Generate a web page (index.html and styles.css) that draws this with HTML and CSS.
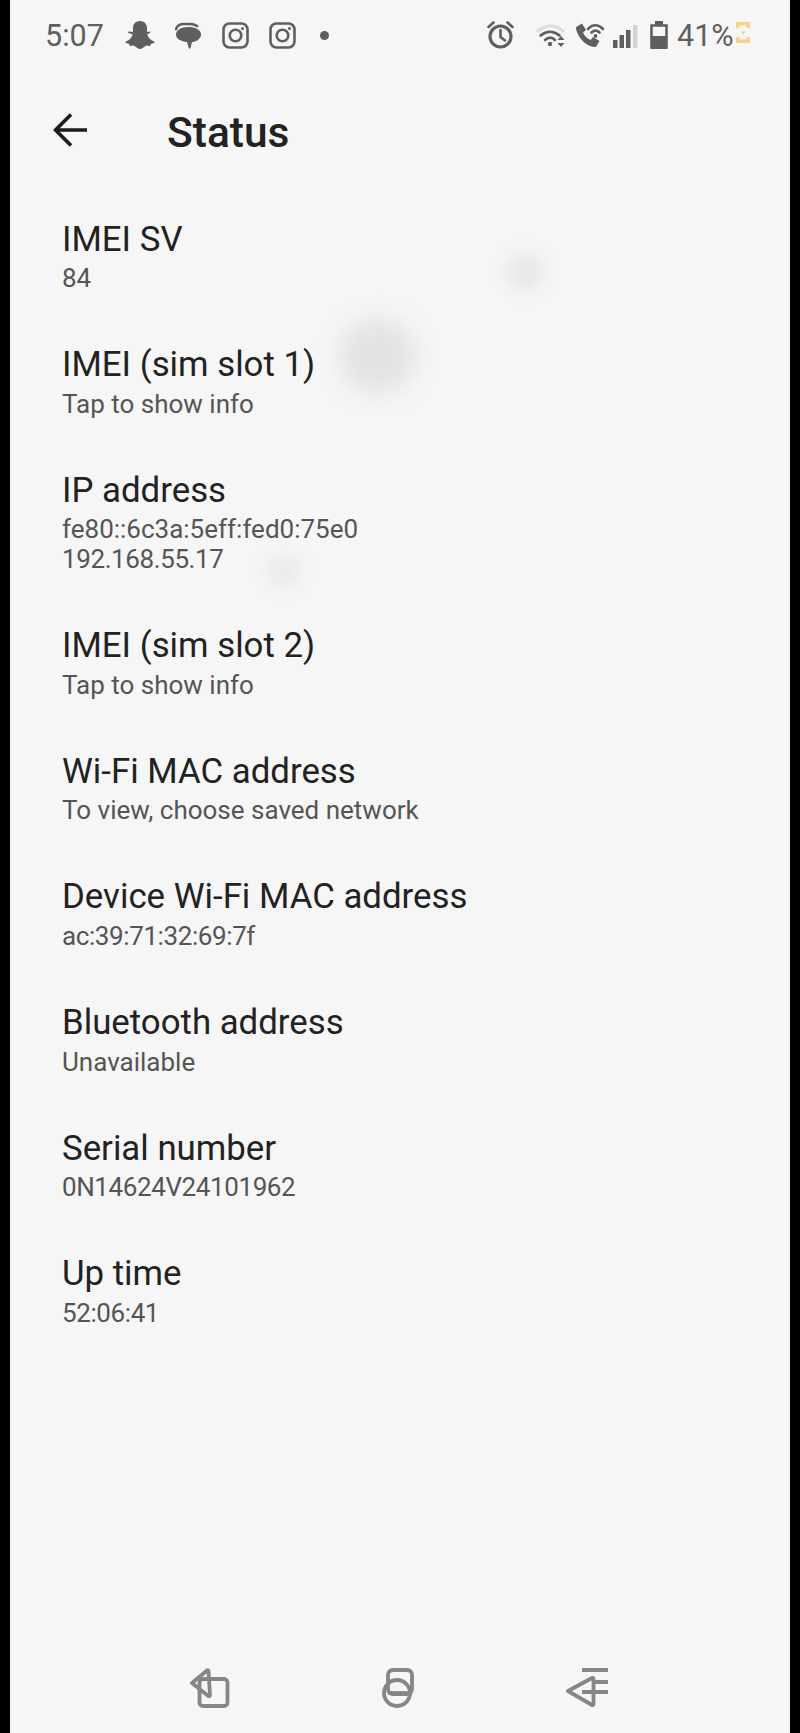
FILE: index.html
```html
<!DOCTYPE html>
<html lang="en">
<head>
  <meta charset="UTF-8" />
  <meta name="viewport" content="width=device-width, initial-scale=1.0"/>
  <title>Status</title>
  <link rel="stylesheet" href="styles.css">
</head>
<body>
  <div class="screen">
    <div class="statusbar">
      <div class="status-left">
        <span class="time">5:07</span>
        <!-- snapchat -->
        <svg class="ic-snap" viewBox="0 0 30 28"><path d="M15 0c4.300 0 7 3 7 7v4l2.500-.6c1 0 1.200 1.200.3 1.700l-2.600 1.400c.8 2.800 3.200 5.600 6.800 7 .9.400.7 1.300-.2 1.600l-3 .8-.7 2-3.500-.3c-2 .3-3.700 3.400-6.600 3.400s-4.600-3.100-6.600-3.400l-3.500.3-.7-2-3-.8c-.9-.3-1.100-1.200-.2-1.600 3.600-1.400 6-4.200 6.800-7L3.600 12.100c-.9-.5-.7-1.700.3-1.700L8 11V7c0-4 2.700-7 7-7z"/></svg>
        <!-- messages -->
        <svg class="ic-msg" viewBox="0 0 27 27"><path class="line" d="M1 7c1-3 4-5 8-5h6c3 0 5 .5 7 2"/><path d="M13 5c7 0 13 2.500 13 7.500S20 20 17 20l-1.500 6c-.4 1-1.500 1-1.800 0L12 20C6 19.500 1 17 1 12.500S6 5 13 5z"/></svg>
        <!-- instagram -->
        <svg class="ic-insta" viewBox="0 0 27 27"><rect class="line" x="1.500" y="1.500" width="24" height="24" rx="6"/><circle class="line" cx="13.500" cy="13.500" r="5.800"/><circle cx="20.500" cy="6.500" r="1.500"/></svg>
        <svg class="ic-insta" viewBox="0 0 27 27"><rect class="line" x="1.500" y="1.500" width="24" height="24" rx="6"/><circle class="line" cx="13.500" cy="13.500" r="5.800"/><circle cx="20.500" cy="6.500" r="1.500"/></svg>
        <span class="dot"></span>
      </div>
      <div class="status-right">
        <!-- alarm -->
        <svg class="ic-alarm" viewBox="0 0 27 28"><circle class="line thick" cx="13.500" cy="15.500" r="10.500"/><path class="line" d="M13.500 9v7l4.500 3.500M1.500 6l5-4.500M25.500 6l-5-4.500"/></svg>
        <!-- wifi with up and down arrows -->
        <svg class="ic-wifi" viewBox="0 0 31 24"><path class="faint" d="M1 9c8-8 19-8 27 0"/><path class="line" d="M4.500 12.500c6-5 13-5 19 0M9 17c3.500-3 7-3 10 0"/><circle cx="14" cy="21" r="2.200"/><path d="M25 13l-3.500 4h7zM25 24l-3.500-4h7z"/></svg>
        <!-- wifi calling -->
        <svg class="ic-call" viewBox="0 0 29 27"><path d="M2 4.500L7 1.500l4 6.500-3 2.500c1.500 3.500 4 6 7.500 7.500l2.500-3 6.500 4-3 5c-.6.900-1.500 1.200-2.500 1C10.500 23.500 3.500 16.500 1 7c-.2-1 .2-2 1-2.500z"/><path class="line" d="M13 7c4.500-5 10-5 15 0M16.500 10.500c3-2.800 5-2.800 8 0"/><circle cx="20.500" cy="14" r="1.900"/></svg>
        <!-- signal -->
        <svg class="ic-signal" viewBox="0 0 25 23"><rect y="15" width="4.500" height="8"/><rect x="6.500" y="10" width="4.500" height="13"/><rect x="13" y="5" width="4.500" height="18"/><rect class="bar-off" x="20" width="4.500" height="23"/></svg>
        <!-- battery -->
        <svg class="ic-batt" viewBox="0 0 18 28"><path class="line" d="M1.500 4.500h15v22h-15z"/><rect x="5" width="8" height="4"/><rect x="1" y="15" width="16" height="13"/></svg>
        <span class="pct">41%</span>
        <!-- charging mark -->
        <svg class="ic-charge" viewBox="0 0 14 21"><path d="M0 0h14v6h-3.500V3.500h-7V6H0zM0 21h14v-6h-3.500v2.500h-7V15H0zM4 9.500h6l-3 3z"/></svg>
      </div>
    </div>

    <div class="toolbar">
      <svg class="back" viewBox="0 0 35 34"><path d="M34 17H3M18 1.500L2.500 17 18 32.500"/></svg>
      <h1 class="title">Status</h1>
    </div>

    <div class="list">
      <div class="item"><div class="label">IMEI SV</div><div class="value">84</div></div>
      <div class="item"><div class="label">IMEI (sim slot 1)</div><div class="value">Tap to show info</div></div>
      <div class="item"><div class="label">IP address</div><div class="value">fe80::6c3a:5eff:fed0:75e0<br><span class="num">192.168.55.17</span></div></div>
      <div class="item"><div class="label">IMEI (sim slot 2)</div><div class="value">Tap to show info</div></div>
      <div class="item"><div class="label">Wi-Fi MAC address</div><div class="value">To view, choose saved network</div></div>
      <div class="item"><div class="label">Device Wi-Fi MAC address</div><div class="value"><span class="num">ac:39:71:32:69:7f</span></div></div>
      <div class="item"><div class="label">Bluetooth address</div><div class="value">Unavailable</div></div>
      <div class="item"><div class="label">Serial number</div><div class="value"><span class="num">0N14624V24101962</span></div></div>
      <div class="item"><div class="label">Up time</div><div class="value"><span class="num">52:06:41</span></div></div>
    </div>

    <div class="navbar">
      <svg class="nav-recent" viewBox="0 0 40 40"><path d="M2 15L17 2.500c.8-.5 1.500 0 1.500 1L20 27c0 1-.8 1.500-1.700 1z"/><rect x="9.500" y="11" width="28" height="27" rx="3.500"/></svg>
      <svg class="nav-home" viewBox="0 0 32 40"><rect x="6" y="2" width="24" height="24" rx="5"/><circle cx="15" cy="25" r="13"/><path d="M6 25h24"/></svg>
      <svg class="nav-back" viewBox="0 0 42 40"><path d="M2 23L26 10c1-.5 1.500 0 1.500 1v25c0 1-.6 1.500-1.500 1z"/><path d="M16 2h26M26 14h16M16 24h26"/></svg>
    </div>

    <!-- smudges on the screen -->
    <span class="smudge smudge-a"></span>
    <span class="smudge smudge-b"></span>
    <span class="smudge smudge-c"></span>
  </div>
</body>
</html>
```

FILE: styles.css
```css
* {
  box-sizing: border-box;
}

html,
body {
  margin: 0;
  padding: 0;
  height: 1733px;
  background: #000;
  overflow: hidden;
}

body {
  font-family: Roboto, sans-serif;
}

.screen {
  position: relative;
  margin: 0 10px;
  height: 1733px;
  overflow: hidden;
  background: #f6f6f6;
  display: flex;
  flex-direction: column;
}

.statusbar {
  height: 70px;
  padding: 0 40px 0 35px;
  display: flex;
  justify-content: space-between;
  align-items: center;
  color: #5f5f5f;
  fill: #5f5f5f;
}

.status-left,
.status-right {
  display: flex;
  align-items: center;
}

.statusbar svg {
  display: block;
  flex: none;
}

.line {
  fill: none;
  stroke: #5f5f5f;
  stroke-width: 2.6;
  stroke-linecap: round;
}

.line.thick {
  stroke-width: 3.2;
}

.faint {
  fill: none;
  stroke: #dcdcdc;
  stroke-width: 3;
}

.bar-off {
  fill: #d2d2d2;
}

.time {
  font-size: 30.500px;
  width: 80px;
}

.ic-snap {
  width: 30px;
  height: 28px;
  margin-right: 20px;
}

.ic-msg {
  width: 27px;
  height: 27px;
  margin-right: 20px;
}

.ic-insta {
  width: 27px;
  height: 27px;
  margin-right: 20px;
}

.dot {
  width: 9px;
  height: 9px;
  margin-left: 4px;
  border-radius: 50%;
  background: #5f5f5f;
}

.ic-alarm {
  width: 27px;
  height: 28px;
  margin-right: 22px;
}

.ic-wifi {
  width: 31px;
  height: 24px;
  margin-right: 8px;
}

.ic-call {
  width: 29px;
  height: 27px;
  margin-right: 9px;
}

.ic-signal {
  width: 25px;
  height: 23px;
  margin: 3px 12px 0 0;
}

.ic-batt {
  width: 18px;
  height: 28px;
  margin-right: 9px;
}

.pct {
  font-size: 30.500px;
  width: 59px;
}

.ic-charge {
  width: 14px;
  height: 21px;
  margin-top: -6px;
  fill: #f3d48a;
}

.toolbar {
  height: 126px;
  padding: 0 0 0 43px;
  display: flex;
  align-items: center;
}

.back {
  width: 35px;
  height: 34px;
  margin: -6px 79px 0 0;
  fill: none;
  stroke: #1c1c1c;
  stroke-width: 3.600;
}

.title {
  margin: -2px 0 0;
  font-size: 42.500px;
  font-weight: 500;
  color: #222;
}

.list {
  padding-left: 52px;
}

.item {
  padding: 20.500px 0 28.600px;
}

.label {
  font-size: 34.800px;
  line-height: 44px;
  color: #222;
}

.value {
  font-size: 26px;
  line-height: 30px;
  margin-top: 2.500px;
  color: #555;
}

.num {
  letter-spacing: -0.4px;
}

.navbar {
  position: relative;
  margin-top: auto;
  height: 93px;
  padding: 0 182px 25px 180px;
  display: flex;
  justify-content: space-between;
  align-items: flex-end;
}

.navbar svg {
  display: block;
  fill: none;
  stroke: #868686;
  stroke-width: 3.800;
  stroke-linejoin: round;
}

.nav-recent {
  width: 40px;
  height: 40px;
}

.nav-home {
  width: 32px;
  height: 40px;
}

.nav-back {
  width: 42px;
  height: 40px;
}

.smudge {
  position: absolute;
  border-radius: 50%;
  background: #e8e8e8;
  filter: blur(8px);
}

.smudge-a {
  left: 496px;
  top: 252px;
  width: 38px;
  height: 40px;
}

.smudge-b {
  left: 329px;
  top: 318px;
  width: 78px;
  height: 76px;
  background: #e3e3e3;
  filter: blur(11px);
}

.smudge-c {
  left: 256px;
  top: 553px;
  width: 36px;
  height: 36px;
  background: #ebebeb;
}
```
